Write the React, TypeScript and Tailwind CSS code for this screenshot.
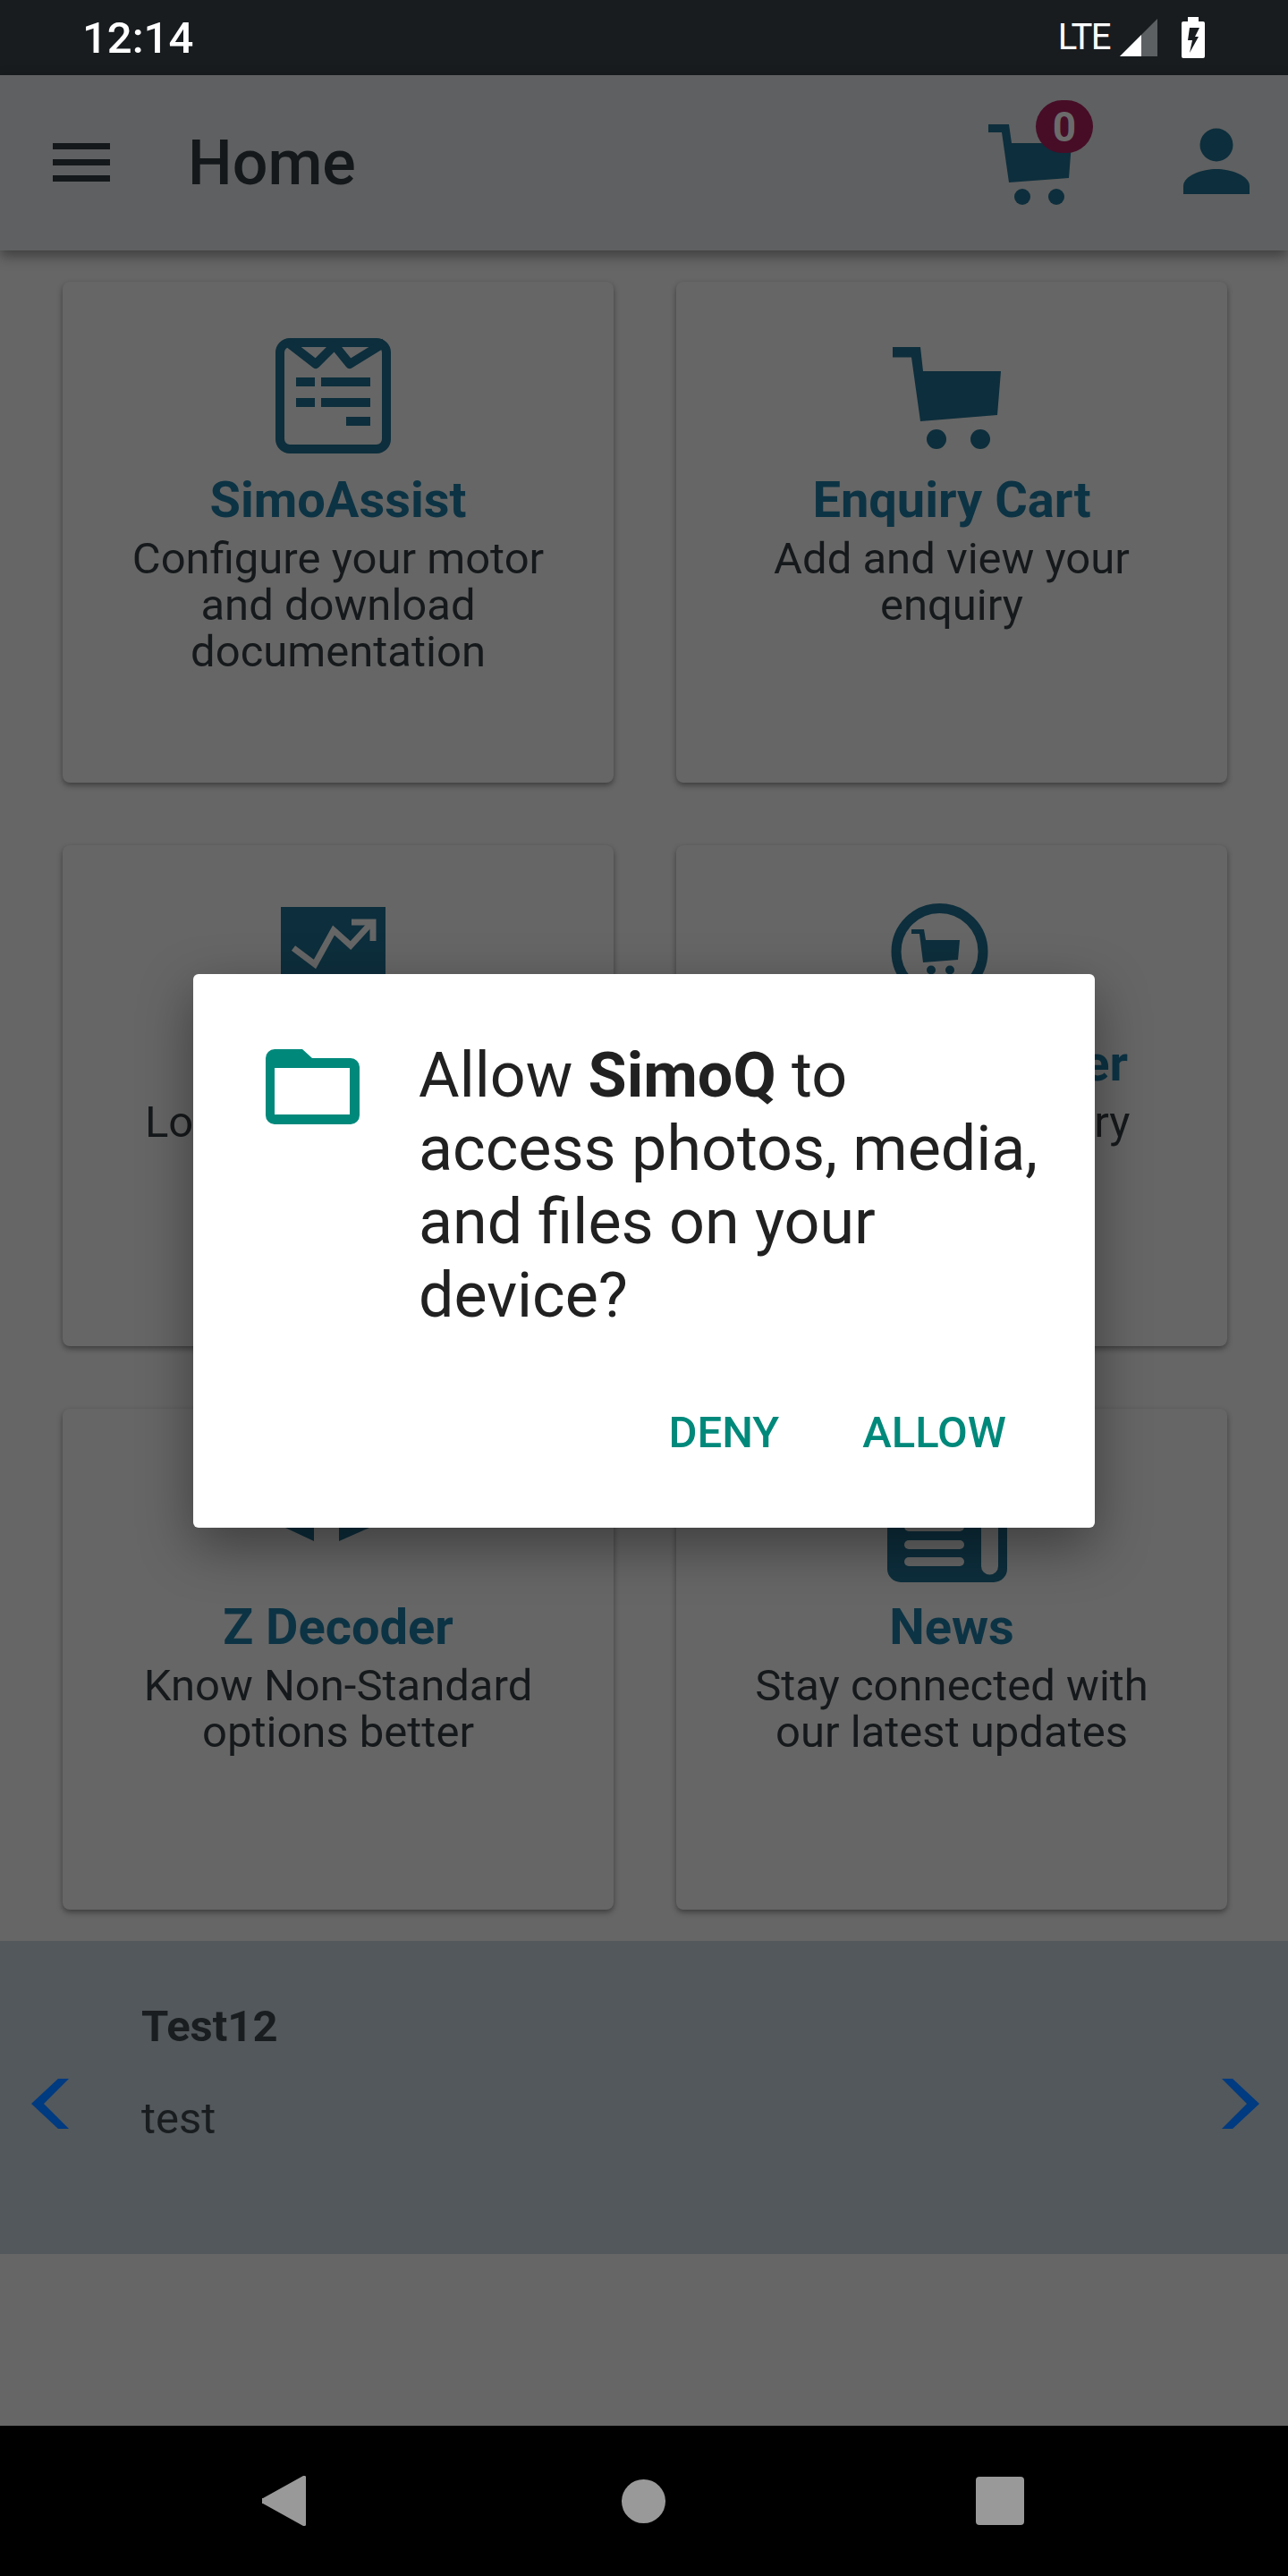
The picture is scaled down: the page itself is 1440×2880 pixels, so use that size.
import React from 'react';

const ICON = '#0d2e3c';
const CARD = '#666666';

const SimoIcon = () => (
    <svg viewBox="0 0 140 140" className="w-[140px] h-[140px] overflow-visible">
        <rect x="5" y="13" width="119" height="119" rx="11" fill="none" stroke={ICON} strokeWidth="10" />
        <path d="M14 13 L45 37 L66 16 L83 37 L122 13" fill="none" stroke={ICON} strokeWidth="10" strokeLinejoin="round" />
        <rect x="23" y="52" width="21" height="10" fill={ICON} />
        <rect x="51" y="52" width="55" height="10" fill={ICON} />
        <rect x="23" y="75" width="21" height="10" fill={ICON} />
        <rect x="51" y="75" width="55" height="10" fill={ICON} />
        <rect x="79" y="96" width="27" height="10" fill={ICON} />
    </svg>
);

const CartIcon = () => (
    <svg viewBox="0 0 140 140" className="w-[140px] h-[140px]">
        <path d="M4 18 H35 L38 45 H125 L121 94 L35 101 L25 29.5 H4 Z" fill={ICON} />
        <circle cx="53" cy="121" r="11" fill={ICON} />
        <circle cx="102" cy="121" r="11" fill={ICON} />
    </svg>
);

const ChartIcon = () => (
    <svg viewBox="0 0 140 140" className="w-[140px] h-[140px]">
        <rect x="6" y="14" width="117" height="110" fill={ICON} />
        <path d="M20 60 L44 78 L65 40 L84 57 L107 32" fill="none" stroke={CARD} strokeWidth="7" />
        <path d="M85 31 H109 V52" fill="none" stroke={CARD} strokeWidth="7" />
    </svg>
);

const RoundCartIcon = () => (
    <svg viewBox="0 0 140 140" className="w-[140px] h-[140px]">
        <circle cx="56.5" cy="64" r="48.5" fill="none" stroke={ICON} strokeWidth="11" />
        <path d="M25 39 H39 L41 51 H79 L77 73 L38 76 L34 44 H25 Z" fill={ICON} />
        <circle cx="47" cy="84.5" r="5" fill={ICON} />
        <circle cx="68" cy="84.5" r="5" fill={ICON} />
    </svg>
);

const DecoderIcon = () => (
    <svg viewBox="0 0 140 140" className="w-[140px] h-[140px]">
        <path d="M11 78 H43 V93 Z" fill={ICON} />
        <path d="M71 78 H105 L71 93 Z" fill={ICON} />
    </svg>
);

const NewsIcon = () => (
    <svg viewBox="0 0 140 140" className="w-[140px] h-[140px] overflow-visible">
        <path d="M-2 60 H132 V124 a15 15 0 0 1 -15 15 H13 a15 15 0 0 1 -15 -15 Z" fill={ICON} />
        <path d="M103 60 H122 V121 a9.5 9.5 0 0 1 -19 0 Z" fill={CARD} />
        <rect x="17" y="72" width="67" height="10" rx="5" fill={CARD} />
        <rect x="17" y="92" width="67" height="10" rx="5" fill={CARD} />
        <rect x="17" y="111" width="67" height="10" rx="5" fill={CARD} />
    </svg>
);

const cards = [
    { icon: <SimoIcon />, title: 'SimoAssist', lines: ['Configure your motor', 'and download', 'documentation'] },
    { icon: <CartIcon />, title: 'Enquiry Cart', lines: ['Add and view your', 'enquiry'] },
    { icon: <ChartIcon />, title: 'Sales Report', lines: ['Look up your orders'] },
    { icon: <RoundCartIcon />, title: 'Enquiry Tracker', lines: ['Track your enquiry'] },
    { icon: <DecoderIcon />, title: 'Z Decoder', lines: ['Know Non-Standard', 'options better'] },
    { icon: <NewsIcon />, title: 'News', lines: ['Stay connected with', 'our latest updates'] },
];

const App = () => {
    return (
        <div className="relative w-[1440px] h-[2880px] flex flex-col bg-[#666666] font-[Roboto,sans-serif] overflow-hidden">
            {/* Status bar */}
            <div className="h-[84px] shrink-0 bg-[#181c1f] flex items-center pl-[92px] pr-[93px] justify-between text-white">
                <span className="text-[49px] font-medium leading-none">12:14</span>
                <div className="flex items-center">
                    <span className="text-[40px] tracking-[-1.5px] leading-none">LTE</span>
                    <svg viewBox="0 0 42 42" className="w-[42px] h-[42px] ml-[11px]">
                        <path d="M0 42 L42 0 V42 Z" fill="#5c6062" />
                        <path d="M0 42 L24 18 V42 Z" fill="#ffffff" />
                    </svg>
                    <svg viewBox="0 0 26 46" className="w-[26px] h-[46px] ml-[27px]">
                        <path d="M7 0 H19 V5 H24 a2 2 0 0 1 2 2 V44 a2 2 0 0 1 -2 2 H2 a2 2 0 0 1 -2 -2 V7 a2 2 0 0 1 2 -2 H7 Z" fill="#ffffff" />
                        <path d="M9 12 H20 L15 22 H19 L9 40 L12 26 H7 Z" fill="#181c1f" />
                    </svg>
                </div>
            </div>

            {/* App bar */}
            <div className="relative z-10 h-[196px] shrink-0 bg-[#5f6061] flex items-center pl-[59px] shadow-[0_6px_14px_rgba(0,0,0,0.4)]">
                <div className="flex flex-col gap-[11px] w-[64px] mt-[-1px]">
                    <div className="h-[7px] bg-[#14181a]" />
                    <div className="h-[7px] bg-[#14181a]" />
                    <div className="h-[7px] bg-[#14181a]" />
                </div>
                <span className="ml-[87px] text-[70px] font-medium leading-none text-[#14181a]">Home</span>
                <div className="relative ml-auto mr-[42px] w-[295px] h-[196px]">
                    <svg viewBox="0 0 295 196" className="w-[295px] h-[196px]">
                        <path d="M2 55 H25 L28 76 H95 L92 115 L25 120 L17 64 H2 Z" fill={ICON} />
                        <circle cx="40" cy="136" r="9" fill={ICON} />
                        <circle cx="78" cy="136" r="9" fill={ICON} />
                        <circle cx="257" cy="78" r="18.5" fill={ICON} />
                        <path d="M220 133 v-9 C220 112 242 105 257 105 S294 112 294 124 v9 Z" fill={ICON} />
                    </svg>
                    <div className="absolute left-[55px] top-[28px] w-[64px] h-[59px] rounded-full bg-[#470d27] flex items-center justify-center text-[46px] font-bold leading-none text-[#6b6b6b]">
                        0
                    </div>
                </div>
            </div>

            {/* Home tiles */}
            <div className="grid grid-cols-2 gap-x-[70px] gap-y-[70px] pl-[70px] pr-[68px] py-[35px]">
                {cards.map((card) => (
                    <div key={card.title} className="h-[560px] bg-[#666666] rounded-lg shadow-[0_3px_6px_rgba(0,0,0,0.4)] flex flex-col items-center pt-[55px]">
                        {card.icon}
                        <div className="mt-[16px] text-[56px] font-bold leading-[66px] text-[#0c3344]">{card.title}</div>
                        <div className="mt-[7px] text-[49px] leading-[52px] text-[#16191b] text-center">
                            {card.lines.map((line) => (
                                <div key={line}>{line}</div>
                            ))}
                        </div>
                    </div>
                ))}
            </div>

            {/* Message carousel */}
            <div className="h-[350px] shrink-0 bg-[#52585b] flex items-center pl-[35px] pr-[32px]">
                <svg viewBox="0 0 42 56" className="w-[42px] h-[56px] mt-[14px]">
                    <path d="M42 0 H30 L0 28 L30 56 H42 L14 28 Z" fill="#003a80" />
                </svg>
                <div className="ml-[81px] mb-[56px] flex flex-col">
                    <span className="text-[49px] font-bold leading-[57px] text-[#1a1d1f]">Test12</span>
                    <span className="mt-[46px] text-[49px] leading-[57px] text-[#1a1d1f]">test</span>
                </div>
                <svg viewBox="0 0 42 56" className="ml-auto w-[42px] h-[56px] mt-[14px]">
                    <path d="M0 0 H12 L42 28 L12 56 H0 L28 28 Z" fill="#003a80" />
                </svg>
            </div>

            <div className="flex-1 bg-[#666666]" />

            {/* Nav bar */}
            <div className="h-[168px] shrink-0 bg-black flex items-center pl-[293px]">
                <svg viewBox="0 0 49 56" className="w-[49px] h-[56px]">
                    <path d="M1 25 L46 0 a2 2 0 0 1 3 2 V54 a2 2 0 0 1 -3 2 L1 31 a3 3 0 0 1 0 -6 Z" fill="#999999" />
                </svg>
                <div className="ml-[353px] w-[49px] h-[49px] rounded-full bg-[#999999]" />
                <div className="ml-[347px] w-[54px] h-[54px] rounded-[4px] bg-[#999999]" />
            </div>

            {/* Permission dialog */}
            <div className="absolute z-20 left-[216px] top-[1089px] w-[1008px] h-[619px] bg-white rounded-[6px] shadow-[0_20px_60px_rgba(0,0,0,0.4)] flex flex-col">
                <div className="flex pl-[81px] pt-[72px]">
                    <svg viewBox="0 0 105 84" className="w-[105px] h-[84px] mt-[12px] shrink-0">
                        <path fillRule="evenodd" d="M10 0 H41 L52 10 H95 a10 10 0 0 1 10 10 V74 a10 10 0 0 1 -10 10 H10 a10 10 0 0 1 -10 -10 V10 a10 10 0 0 1 10 -10 Z M10 21 V73 H94 V21 Z" fill="#00897b" />
                    </svg>
                    <div className="ml-[66px] text-[70px] leading-[82px] text-[#212121]">
                        <div>Allow <b className="font-bold">SimoQ</b> to</div>
                        <div>access photos, media,</div>
                        <div>and files on your</div>
                        <div>device?</div>
                    </div>
                </div>
                <div className="flex justify-end pr-[99px] mt-[84px] text-[49px] font-medium leading-[57px] text-[#00897b]">
                    <span>DENY</span>
                    <span className="ml-[93px]">ALLOW</span>
                </div>
            </div>
        </div>
    );
};

export default App;
